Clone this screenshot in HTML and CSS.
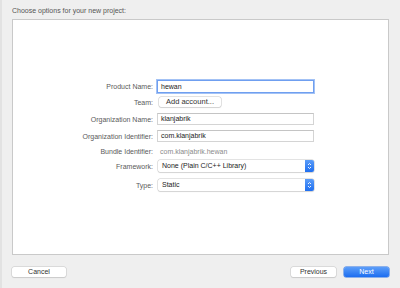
FILE: index.html
```html
<!DOCTYPE html>
<html lang="en">
<head>
    <meta charset="UTF-8">
    <title>Choose options for your new project</title>
    <link rel="stylesheet" href="styles.css">
</head>
<body>
<div class="window">
    <div class="title">Choose options for your new project:</div>

    <div class="panel">
        <div class="form">
            <div class="row r-product">
                <label>Product Name:</label>
                <div class="field focused">hewan</div>
            </div>
            <div class="row r-team">
                <label>Team:</label>
                <button class="btn small">Add account...</button>
            </div>
            <div class="row r-org">
                <label>Organization Name:</label>
                <div class="field">klanjabrik</div>
            </div>
            <div class="row r-orgid">
                <label>Organization Identifier:</label>
                <div class="field">com.klanjabrik</div>
            </div>
            <div class="row r-bundle">
                <label>Bundle Identifier:</label>
                <div class="plain">com.klanjabrik.hewan</div>
            </div>
            <div class="row r-framework">
                <label>Framework:</label>
                <div class="popup">
                    <span>None (Plain C/C++ Library)</span>
                    <span class="stepper">
                        <svg width="5" height="8" viewBox="0 0 5 8"><path d="M1 3 L2.5 1.5 L4 3 M1 5 L2.5 6.5 L4 5" fill="none" stroke="#fff" stroke-width="0.9"/></svg>
                    </span>
                </div>
            </div>
            <div class="row r-type">
                <label>Type:</label>
                <div class="popup">
                    <span>Static</span>
                    <span class="stepper">
                        <svg width="5" height="8" viewBox="0 0 5 8"><path d="M1 3 L2.5 1.5 L4 3 M1 5 L2.5 6.5 L4 5" fill="none" stroke="#fff" stroke-width="0.9"/></svg>
                    </span>
                </div>
            </div>
        </div>
    </div>

    <div class="footer">
        <button class="btn wide">Cancel</button>
        <div class="right">
            <button class="btn wide">Previous</button>
            <button class="btn wide primary">Next</button>
        </div>
    </div>
</div>
</body>
</html>
```

FILE: styles.css
```css
* {
    margin: 0;
    padding: 0;
    box-sizing: border-box;
}

body {
    font-family: 'Liberation Sans', Arial, sans-serif;
    font-size: 7px;
    background-color: #efefef;
    color: #222;
    width: 400px;
    height: 288px;
    overflow: hidden;
}

.window {
    height: 288px;
    border-left: 2px solid #e2e2e2;
    padding: 0 10px 0 10px;
}

.title {
    height: 19px;
    padding-top: 7px;
    color: #555;
    font-size: 7px;
}

.panel {
    background: white;
    border: 1px solid #c9c9c9;
    width: 377px;
    height: 236px;
}

.form {
    padding-top: 60px;
}

.row {
    display: grid;
    grid-template-columns: 140px 157px;
    column-gap: 4px;
    align-items: center;
    height: 12px;
}

.row label {
    text-align: right;
    color: #5a5a5a;
    white-space: nowrap;
}

.r-product { height: 13px; }
.r-team { margin-top: 3px; }
.r-org { margin-top: 5px; }
.r-orgid { margin-top: 5px; }
.r-bundle { margin-top: 4px; height: 10px; }
.r-framework { margin-top: 4px; }
.r-type { margin-top: 7px; }

.field {
    height: 12px;
    border: 1px solid #d4d4d4;
    border-top-color: #c4c4c4;
    background: white;
    padding: 0 3px;
    line-height: 10px;
    color: #222;
}

.field.focused {
    height: 13px;
    border: 1px solid #6f9ff0;
    box-shadow: 0 0 0 1px #a3c2f5;
    line-height: 11px;
}

.plain {
    color: #8a8a8a;
    padding-left: 3px;
}

.popup {
    height: 12px;
    margin-left: 1px;
    width: 156px;
    display: flex;
    justify-content: space-between;
    align-items: center;
    background: white;
    border-radius: 2px;
    box-shadow: 0 0 0 0.5px #c8c8c8, 0 1px 1px rgba(0,0,0,0.12);
    padding-left: 4px;
    line-height: 12px;
}

.stepper {
    width: 9px;
    height: 12px;
    background: linear-gradient(#5a9cf8, #1f6ff0);
    border-radius: 0 2px 2px 0;
    display: flex;
    align-items: center;
    justify-content: center;
}

.btn {
    font-family: 'Liberation Sans', Arial, sans-serif;
    font-size: 7px;
    color: #333;
    background: white;
    border: none;
    border-radius: 2px;
    box-shadow: 0 0 0 0.5px #c6c6c6, 0 1px 1px rgba(0,0,0,0.12);
    height: 10px;
    line-height: 10px;
}

.btn.small {
    width: 62px;
    margin-left: 2px;
    font-size: 7.5px;
}

.btn.wide {
    width: 45px;
}

.footer {
    display: flex;
    justify-content: space-between;
    margin-top: 12px;
    width: 377px;
}

.footer > .btn {
    width: 54px;
}

.right {
    display: flex;
    gap: 8px;
}

.btn.primary {
    background: linear-gradient(#5c9ef9, #1c6df0);
    color: white;
    box-shadow: 0 0 0 0.5px #2a72e6;
}
```
